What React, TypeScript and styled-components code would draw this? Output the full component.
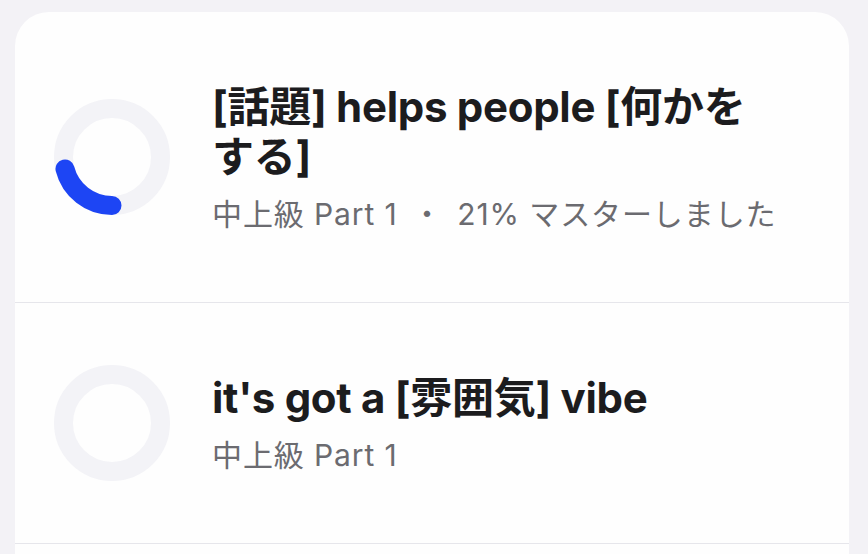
import React from 'react'
import styled, { createGlobalStyle } from 'styled-components'

const GlobalStyle = createGlobalStyle`
    html, body {
        margin: 0;
        padding: 0;
        background: #f3f2f6;
    }
    body {
        font-family: Inter, 'Noto Sans CJK JP', sans-serif;
        -webkit-font-smoothing: antialiased;
    }
`

interface Lesson {
    title: string
    level: string
    progress: number
}

const lessons: Lesson[] = [
    { title: '[話題] helps people [何かをする]', level: '中上級 Part 1', progress: 21 },
    { title: "it's got a [雰囲気] vibe", level: '中上級 Part 1', progress: 0 },
]

const Page = styled.div`
    padding: 12px 19px 0 15px;
`

const Card = styled.ul`
    list-style: none;
    margin: 0;
    padding: 0;
    background: #fefefe;
    border-radius: 34px;
    min-height: 600px;
`

const Row = styled.li`
    display: flex;
    align-items: center;
    gap: 42px;
    padding: 62px 85px 62px 39px;
    border-bottom: 1px solid #e6e6eb;
`

const Texts = styled.div`
    display: flex;
    flex-direction: column;
    gap: 14px;
    padding: 8px 0;
    min-width: 0;
`

const Title = styled.div`
    font-size: 42px;
    line-height: 50px;
    font-weight: 700;
    color: #1c1c1e;
    letter-spacing: -0.3px;
`

const Sub = styled.div`
    font-size: 30px;
    line-height: 36px;
    color: #6b6b70;
    letter-spacing: 0.9px;
    white-space: nowrap;
`

const Dot = styled.span`
    margin: 0 5px;
`

const RingSvg = styled.svg`
    flex: none;
    width: 116px;
    height: 116px;
`

const R = 48.5
const C = 2 * Math.PI * R

const Ring = ({ progress }: { progress: number }) => (
    <RingSvg viewBox="0 0 116 116">
        <circle cx="58" cy="58" r={R} fill="none" stroke="#f3f3f7" strokeWidth="19" />
        {progress > 0 && (
            <circle
                cx="58"
                cy="58"
                r={R}
                fill="none"
                stroke="#1d45f4"
                strokeWidth="19"
                strokeLinecap="round"
                strokeDasharray={`${(C * progress) / 100} ${C}`}
                transform="rotate(90 58 58)"
            />
        )}
    </RingSvg>
)

const App = () => (
    <Page>
        <GlobalStyle />
        <Card>
            {lessons.map((l) => (
                <Row key={l.title}>
                    <Ring progress={l.progress} />
                    <Texts>
                        <Title>{l.title}</Title>
                        <Sub>
                            {l.level}
                            {l.progress > 0 && (
                                <>
                                    {' '}
                                    <Dot>・</Dot> {l.progress}% マスターしました
                                </>
                            )}
                        </Sub>
                    </Texts>
                </Row>
            ))}
        </Card>
    </Page>
)

export default App
